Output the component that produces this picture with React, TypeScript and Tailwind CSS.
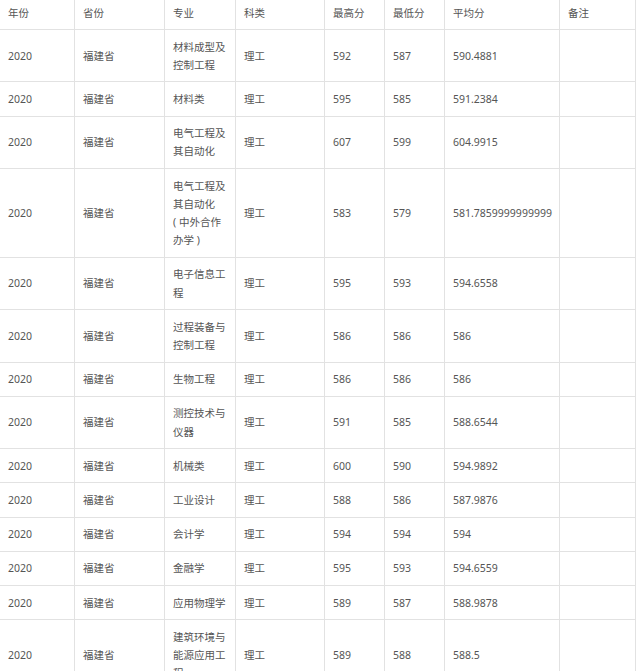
const headers = ['年份', '省份', '专业', '科类', '最高分', '最低分', '平均分', '备注'];

const widths = ['w-[75px]', 'w-[90px]', 'w-[71px]', 'w-[89px]', 'w-[60px]', 'w-[60px]', 'w-[115px]', 'w-[76px]'];

// year, province, major, type, max, min, avg
const rows: string[][] = [
  ['2020', '福建省', '材料成型及控制工程', '理工', '592', '587', '590.4881'],
  ['2020', '福建省', '材料类', '理工', '595', '585', '591.2384'],
  ['2020', '福建省', '电气工程及其自动化', '理工', '607', '599', '604.9915'],
  ['2020', '福建省', '电气工程及其自动化 (\u00a0中外合作办学\u00a0)', '理工', '583', '579', '581.7859999999999'],
  ['2020', '福建省', '电子信息工程', '理工', '595', '593', '594.6558'],
  ['2020', '福建省', '过程装备与控制工程', '理工', '586', '586', '586'],
  ['2020', '福建省', '生物工程', '理工', '586', '586', '586'],
  ['2020', '福建省', '测控技术与仪器', '理工', '591', '585', '588.6544'],
  ['2020', '福建省', '机械类', '理工', '600', '590', '594.9892'],
  ['2020', '福建省', '工业设计', '理工', '588', '586', '587.9876'],
  ['2020', '福建省', '会计学', '理工', '594', '594', '594'],
  ['2020', '福建省', '金融学', '理工', '595', '593', '594.6559'],
  ['2020', '福建省', '应用物理学', '理工', '589', '587', '588.9878'],
  ['2020', '福建省', '建筑环境与能源应用工程', '理工', '589', '588', '588.5'],
];

const App = () => {
  return (
    <div
      className="w-[640px] h-[671px] overflow-hidden bg-white text-[#555] text-[10.5px] leading-[18.2px]"
      style={{ fontFamily: '"Noto Sans", "Noto Sans CJK SC", sans-serif' }}
    >
      <table className="w-[636px] table-fixed border-separate border-spacing-0">
        <colgroup>
          {widths.map((w, i) => (
            <col key={i} className={w} />
          ))}
        </colgroup>
        <thead>
          <tr>
            {headers.map((h) => (
              <th
                key={h}
                className="h-[30px] px-2 pt-[4px] pb-[6px] text-left font-normal align-middle border-r border-b border-[#e2e2e2]"
              >
                {h}
              </th>
            ))}
          </tr>
        </thead>
        <tbody>
          {rows.map((r, i) => (
            <tr key={i}>
              {[...r, ''].map((c, j) => (
                <td
                  key={j}
                  className={`px-2 py-[7.5px] align-middle border-r border-b border-[#e2e2e2] ${j === 2 ? '' : 'whitespace-nowrap'}`}
                >
                  {c}
                </td>
              ))}
            </tr>
          ))}
        </tbody>
      </table>
    </div>
  );
};

export default App;
